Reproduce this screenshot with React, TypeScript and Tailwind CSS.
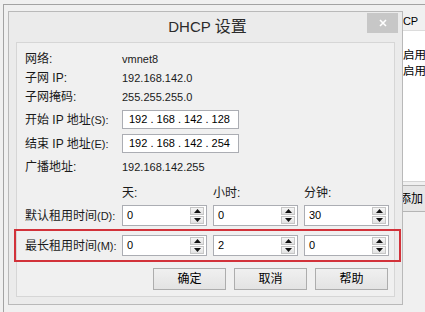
import React from 'react';

const FONT = "font-['Liberation_Sans','Noto_Sans_CJK_SC',sans-serif]";

const SpinHalf: React.FC<{ up?: boolean }> = ({ up }) => (
  <div className="flex flex-1 items-center justify-center border border-[#c6c6c6] bg-gradient-to-b from-[#f6f6f6] to-[#e2e2e2]">
    <svg width="7" height="4" viewBox="0 0 7 4">
      {up ? <polygon points="0,4 3.5,0 7,4" fill="#111" /> : <polygon points="0,0 3.5,4 7,0" fill="#111" />}
    </svg>
  </div>
);

const SpinBox: React.FC<{ value: string }> = ({ value }) => (
  <div className="flex h-[21px] w-[85px] items-center border border-[#abadb3] bg-white">
    <span className="flex-1 pl-[4px] text-[11px] text-black">{value}</span>
    <div className="mr-[2px] flex h-[17px] w-[14px] flex-col gap-px">
      <SpinHalf up />
      <SpinHalf />
    </div>
  </div>
);

const Btn: React.FC<{ label: string }> = ({ label }) => (
  <div className="flex h-[22px] w-[73px] items-center justify-center border border-[#adadad] bg-gradient-to-b from-[#f0f0f0] to-[#e3e3e3] text-[12px] text-black">
    {label}
  </div>
);

// label with the mnemonic part, e.g. "(S):", set a bit smaller like the original
const Label: React.FC<{ text: string; key_?: string }> = ({ text, key_ }) => (
  <span className="w-[97px] shrink-0 text-[12px] whitespace-nowrap text-[#1a1a1a]">
    {text}
    {key_ && <span className="text-[11px]">{key_}</span>}
  </span>
);

const InfoRow: React.FC<{ label: string; value: string; h: string }> = ({ label, value, h }) => (
  <div className={`flex items-center ${h}`}>
    <Label text={label} />
    <span className="text-[11px] text-[#1a1a1a]">{value}</span>
  </div>
);

const IpRow: React.FC<{ label: string; k: string; ip: string; mt: string }> = ({ label, k, ip, mt }) => (
  <div className={`flex h-[19px] items-center ${mt}`}>
    <Label text={label} key_={k} />
    <div className="flex h-[19px] w-[117px] items-center border border-[#abadb3] bg-white pl-[6px] text-[11px] whitespace-pre text-black">
      {ip}
    </div>
  </div>
);

const LeaseRow: React.FC<{ label: string; k: string; values: string[]; mt?: string }> = ({ label, k, values, mt = '' }) => (
  <div className={`flex h-[21px] items-center ${mt}`}>
    <Label text={label} key_={k} />
    <div className="flex gap-[6px]">
      {values.map((v, i) => <SpinBox key={i} value={v} />)}
    </div>
  </div>
);

export default function App() {
  return (
    <div className={`relative h-[312px] w-[425px] overflow-hidden bg-[#f0f0f0] ${FONT}`}>
      {/* window behind the dialog */}
      <div className="absolute top-[4px] right-0 bottom-0 left-[3px] flex border-t border-l border-[#a3a3a3]">
        <div className="w-[381px] shrink-0" />
        <div className="flex flex-1 flex-col pt-[7px]">
          <div className="flex h-[19px] items-center border-b border-[#dcdcdc] pl-[2px] text-[11px] text-black">DHCP</div>
          <div className="flex h-[151px] flex-col border-b border-[#d5d5d5] bg-white pt-[17px] pl-[18px] text-[11.5px] text-black">
            <span className="flex h-[16px] items-center whitespace-nowrap">启用</span>
            <span className="flex h-[16px] items-center whitespace-nowrap">启用</span>
          </div>
          <div className="mt-[3px] flex h-[27px] items-center border-y border-[#b5b5b5] bg-[#e6e6e6] pl-[14px] text-[12px] whitespace-nowrap text-black">
            添加
          </div>
        </div>
      </div>

      {/* dialog */}
      <div className="absolute top-[11px] left-[8px] z-10 flex h-[294px] w-[395px] flex-col border border-[#b9b9b9] bg-[#ebebeb]">
        <div className="relative flex h-[30px] shrink-0 items-center justify-center pl-[4px] text-[#2b2b2b]">
          <span className="text-[15px]">DHCP</span>
          <span className="ml-[4px] text-[16px]">设置</span>
          <div className="absolute top-[1px] right-[4px] flex h-[20px] w-[31px] items-center justify-center bg-[#c7c7c7]">
            <svg width="8" height="8" viewBox="0 0 8 8">
              <path d="M1 1L7 7M7 1L1 7" stroke="#fff" strokeWidth="1.6" />
            </svg>
          </div>
        </div>

        <div className="mx-[7px] mb-[7px] flex flex-1 flex-col border border-[#d6d6d6] bg-[#f0f0f0] pt-[7px] pl-[8px]">
          <InfoRow label="网络:" value="vmnet8" h="h-[18px]" />
          <InfoRow label="子网 IP:" value="192.168.142.0" h="h-[20px]" />
          <InfoRow label="子网掩码:" value="255.255.255.0" h="h-[18px]" />
          <IpRow label="开始 IP 地址" k="(S):" ip="192 . 168 . 142 . 128" mt="mt-[4px]" />
          <IpRow label="结束 IP 地址" k="(E):" ip="192 . 168 . 142 . 254" mt="mt-[5px]" />
          <InfoRow label="广播地址:" value="192.168.142.255" h="h-[28px]" />

          <div className="flex h-[24px] items-center pl-[97px] text-[12px] text-[#1a1a1a]">
            <span className="w-[91px]">天:</span>
            <span className="w-[91px]">小时:</span>
            <span>分钟:</span>
          </div>
          <LeaseRow label="默认租用时间" k="(D):" values={['0', '0', '30']} />
          <LeaseRow label="最长租用时间" k="(M):" values={['0', '2', '0']} mt="mt-[9px]" />

          <div className="mt-[12px] ml-[128px] flex gap-[8px]">
            <Btn label="确定" />
            <Btn label="取消" />
            <Btn label="帮助" />
          </div>
        </div>
      </div>

      {/* highlight annotation */}
      <div className="absolute top-[229px] left-[14px] z-20 h-[33px] w-[387px] border-2 border-[#d2323a]" />
    </div>
  );
}
